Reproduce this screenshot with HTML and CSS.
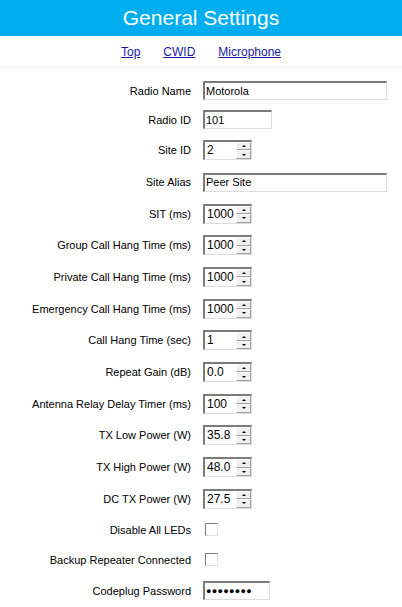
FILE: index.html
```html
<!DOCTYPE html>
<html>
<head>
<meta charset="utf-8">
<link rel="stylesheet" href="styles.css">
</head>
<body>
<header class="title">General Settings</header>
<nav class="nav">
  <a href="#">Top</a>
  <a href="#">CWID</a>
  <a href="#">Microphone</a>
</nav>
<main class="form">
  <div class="row r-text"><span class="lbl">Radio Name</span><span class="field w-long">Motorola</span></div>
  <div class="row r-text"><span class="lbl">Radio ID</span><span class="field w-short">101</span></div>
  <div class="row r-spin"><span class="lbl">Site ID</span><span class="field spin"><span class="val">2</span><span class="btns"><span class="btn up"></span><span class="btn down"></span></span></span></div>
  <div class="row r-text r-alias"><span class="lbl">Site Alias</span><span class="field w-long">Peer Site</span></div>
  <div class="row r-spin"><span class="lbl">SIT (ms)</span><span class="field spin"><span class="val">1000</span><span class="btns"><span class="btn up"></span><span class="btn down"></span></span></span></div>
  <div class="row r-spin"><span class="lbl">Group Call Hang Time (ms)</span><span class="field spin"><span class="val">1000</span><span class="btns"><span class="btn up"></span><span class="btn down"></span></span></span></div>
  <div class="row r-spin"><span class="lbl">Private Call Hang Time (ms)</span><span class="field spin"><span class="val">1000</span><span class="btns"><span class="btn up"></span><span class="btn down"></span></span></span></div>
  <div class="row r-spin"><span class="lbl">Emergency Call Hang Time (ms)</span><span class="field spin"><span class="val">1000</span><span class="btns"><span class="btn up"></span><span class="btn down"></span></span></span></div>
  <div class="row r-spin"><span class="lbl">Call Hang Time (sec)</span><span class="field spin"><span class="val">1</span><span class="btns"><span class="btn up"></span><span class="btn down"></span></span></span></div>
  <div class="row r-spin"><span class="lbl">Repeat Gain (dB)</span><span class="field spin"><span class="val">0.0</span><span class="btns"><span class="btn up"></span><span class="btn down"></span></span></span></div>
  <div class="row r-spin"><span class="lbl">Antenna Relay Delay Timer (ms)</span><span class="field spin"><span class="val">100</span><span class="btns"><span class="btn up"></span><span class="btn down"></span></span></span></div>
  <div class="row r-spin"><span class="lbl">TX Low Power (W)</span><span class="field spin"><span class="val">35.8</span><span class="btns"><span class="btn up"></span><span class="btn down"></span></span></span></div>
  <div class="row r-spin"><span class="lbl">TX High Power (W)</span><span class="field spin"><span class="val">48.0</span><span class="btns"><span class="btn up"></span><span class="btn down"></span></span></span></div>
  <div class="row r-spin"><span class="lbl">DC TX Power (W)</span><span class="field spin"><span class="val">27.5</span><span class="btns"><span class="btn up"></span><span class="btn down"></span></span></span></div>
  <div class="row r-check"><span class="lbl">Disable All LEDs</span><span class="check"></span></div>
  <div class="row r-check"><span class="lbl">Backup Repeater Connected</span><span class="check"></span></div>
  <div class="row r-text r-pass"><span class="lbl">Codeplug Password</span><span class="field w-pass pass">&#9679;&#9679;&#9679;&#9679;&#9679;&#9679;&#9679;&#9679;</span></div>
</main>
</body>
</html>
```
FILE: styles.css
```css
html, body {
  margin: 0;
  padding: 0;
  background: #ffffff;
  font-family: "Liberation Sans", Arial, sans-serif;
  color: #000;
}
.title {
  height: 36px;
  background: #00aeef;
  color: #ffffff;
  font-size: 21px;
  line-height: 36px;
  text-align: center;
}
.nav {
  display: flex;
  justify-content: center;
  gap: 23px;
  height: 31px;
  align-items: center;
  border-bottom: 1px solid #ececec;
  font-size: 12px;
}
.nav a {
  color: #1a1aa6;
  text-decoration: underline;
}
.form {
  padding-top: 8px;
}
.row {
  display: grid;
  grid-template-columns: 191px auto;
  column-gap: 12px;
  align-items: center;
  justify-items: start;
  font-size: 11px;
}
.r-text { height: 29px; }
.r-alias { height: 31px; margin-top: 1px; }
.r-spin { height: 31.7px; }
.r-check { height: 29.5px; margin-top: 0.5px; }
.r-pass { margin-top: 1.5px; }
.lbl {
  justify-self: end;
  white-space: nowrap;
}
.field {
  box-sizing: border-box;
  height: 19px;
  border-style: solid;
  border-width: 2px 1px 1px 2px;
  border-color: #7b7b7b #dcdcdc #dcdcdc #7b7b7b;
  background: #fff;
  font-size: 11px;
  line-height: 15px;
  padding-left: 1px;
  display: flex;
  align-items: center;
}
.w-long { width: 184px; }
.w-short { width: 69px; }
.w-pass { width: 67px; }
.pass {
  font-size: 9px;
  letter-spacing: 0.3px;
  padding-left: 1px;
}
.spin {
  width: 49px;
  height: 20px;
  justify-content: space-between;
  padding-left: 2px;
}
.val {
  font-size: 12px;
}
.btns {
  display: flex;
  flex-direction: column;
  width: 15px;
  height: 17px;
}
.btn {
  flex: 1;
  box-sizing: border-box;
  background: #f0f0f0;
  border: 1px solid;
  border-color: #fafafa #a0a0a0 #a0a0a0 #fafafa;
  position: relative;
}
.btn::after {
  content: "";
  position: absolute;
  left: 50%;
  top: 50%;
  width: 0;
  height: 0;
  border-left: 2px solid transparent;
  border-right: 2px solid transparent;
  transform: translate(-50%, -50%);
}
.up::after { border-bottom: 2px solid #000; }
.down::after { border-top: 2px solid #000; }
.check {
  box-sizing: border-box;
  width: 13px;
  height: 13px;
  margin-left: 2px;
  border-style: solid;
  border-width: 1px;
  border-color: #7b7b7b #e0e0e0 #e0e0e0 #7b7b7b;
  background: #fff;
}
```
